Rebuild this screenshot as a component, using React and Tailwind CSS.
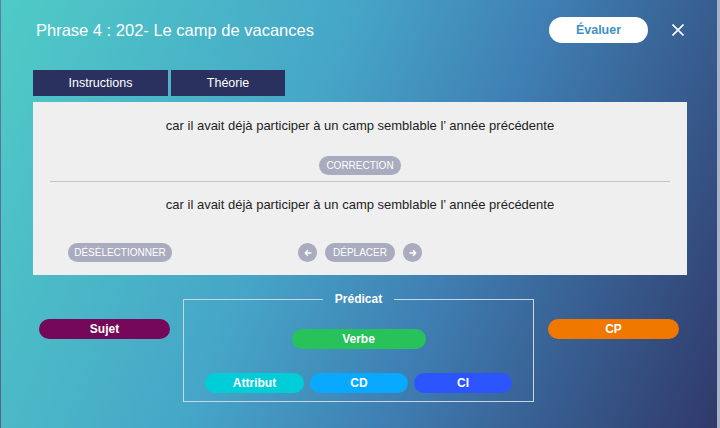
const sentence = "car il avait déjà participer à un camp semblable l’ année précédente";

function GreyPill({ children, className = "" }) {
  return (
    <div
      className={`h-[19px] rounded-full bg-[#a9abbe] text-white text-[10px] leading-[19px] text-center ${className}`}
    >
      {children}
    </div>
  );
}

function ArrowButton({ dir }) {
  return (
    <div className="w-[19px] h-[19px] rounded-full bg-[#a9abbe] flex items-center justify-center">
      <svg width="8" height="8" viewBox="0 0 8 8" fill="none" stroke="#ffffff" strokeWidth="1.4" strokeLinecap="round" strokeLinejoin="round">
        {dir === "left" ? (
          <path d="M7 4H1.2M3.6 1.5L1.2 4l2.4 2.5" />
        ) : (
          <path d="M1 4h5.8M4.4 1.5L6.8 4 4.4 6.5" />
        )}
      </svg>
    </div>
  );
}

function Tag({ label, className }) {
  return (
    <div
      className={`h-[20px] rounded-full text-white font-bold text-[12px] leading-[20px] text-center ${className}`}
    >
      {label}
    </div>
  );
}

export default function App() {
  return (
    <div
      className="w-[720px] h-[428px] overflow-hidden border-l border-r-[3px] border-l-white/20 border-r-[#a7b3c9] bg-[linear-gradient(112deg,#4fcbc6_0%,#46a6c8_40%,#3f7fb3_62%,#30396a_100%)]"
      style={{ fontFamily: '"Liberation Sans", Arial, sans-serif' }}
    >
      {/* en-tête */}
      <div className="flex items-center h-[26px] mt-[17px] pl-[35px] pr-[33px]">
        <h1 className="flex-1 text-white text-[16.5px] leading-[26px]">
          Phrase 4 : 202- Le camp de vacances
        </h1>
        <button
          type="button"
          className="w-[99px] h-[26px] rounded-full bg-white text-[#3f8fc7] font-bold text-[12.5px]"
        >
          Évaluer
        </button>
        <svg className="ml-[24px]" width="12" height="12" viewBox="0 0 12 12" stroke="#ffffff" strokeWidth="1.6">
          <path d="M0.5 0.5l11 11M11.5 0.5l-11 11" />
        </svg>
      </div>

      {/* onglets */}
      <div className="flex gap-[3px] mt-[27px] ml-[32px]">
        <div className="w-[135px] h-[26px] bg-[#2b315e] text-white text-[12.5px] leading-[26px] text-center">
          Instructions
        </div>
        <div className="w-[114px] h-[26px] bg-[#2b315e] text-white text-[12.5px] leading-[26px] text-center">
          Théorie
        </div>
      </div>

      {/* panneau */}
      <div className="mt-[6px] ml-[32px] w-[654px] h-[173px] bg-[#efefef] pt-[16px]">
        <p className="text-[13px] leading-4 text-[#1e1e1e] text-center">{sentence}</p>
        <div className="flex justify-center mt-[22px]">
          <GreyPill className="w-[82px]">CORRECTION</GreyPill>
        </div>
        <div className="mx-[17px] mt-[6px] h-px bg-[#c3c3c3]" />
        <p className="mt-[15px] text-[13px] leading-4 text-[#1e1e1e] text-center">{sentence}</p>
        <div className="grid grid-cols-3 items-center mt-[30px]">
          <div className="pl-[35px]">
            <GreyPill className="w-[104px]">DÉSÉLECTIONNER</GreyPill>
          </div>
          <div className="flex justify-center items-center gap-[8px]">
            <ArrowButton dir="left" />
            <GreyPill className="w-[70px]">DÉPLACER</GreyPill>
            <ArrowButton dir="right" />
          </div>
          <div />
        </div>
      </div>

      {/* fonctions */}
      <div className="flex items-start mt-[17px] ml-[38px]">
        <Tag label="Sujet" className="w-[131px] mt-[27px] bg-[#76085a]" />
        <fieldset className="ml-[13px] w-[351px] border border-[#c9d6e6] pb-[8px]">
          <legend className="mx-auto px-[12px] text-white font-bold text-[12px] leading-[15px]">
            Prédicat
          </legend>
          <div className="flex justify-center mt-[22px]">
            <Tag label="Verbe" className="w-[134px] bg-[#27c25a]" />
          </div>
          <div className="flex justify-center gap-[6px] mt-[24px]">
            <Tag label="Attribut" className="w-[99px] bg-[#00cdd8]" />
            <Tag label="CD" className="w-[98px] bg-[#08a9ff]" />
            <Tag label="CI" className="w-[98px] bg-[#2c55ff]" />
          </div>
        </fieldset>
        <Tag label="CP" className="ml-[14px] w-[131px] mt-[27px] bg-[#f07800]" />
      </div>
    </div>
  );
}
